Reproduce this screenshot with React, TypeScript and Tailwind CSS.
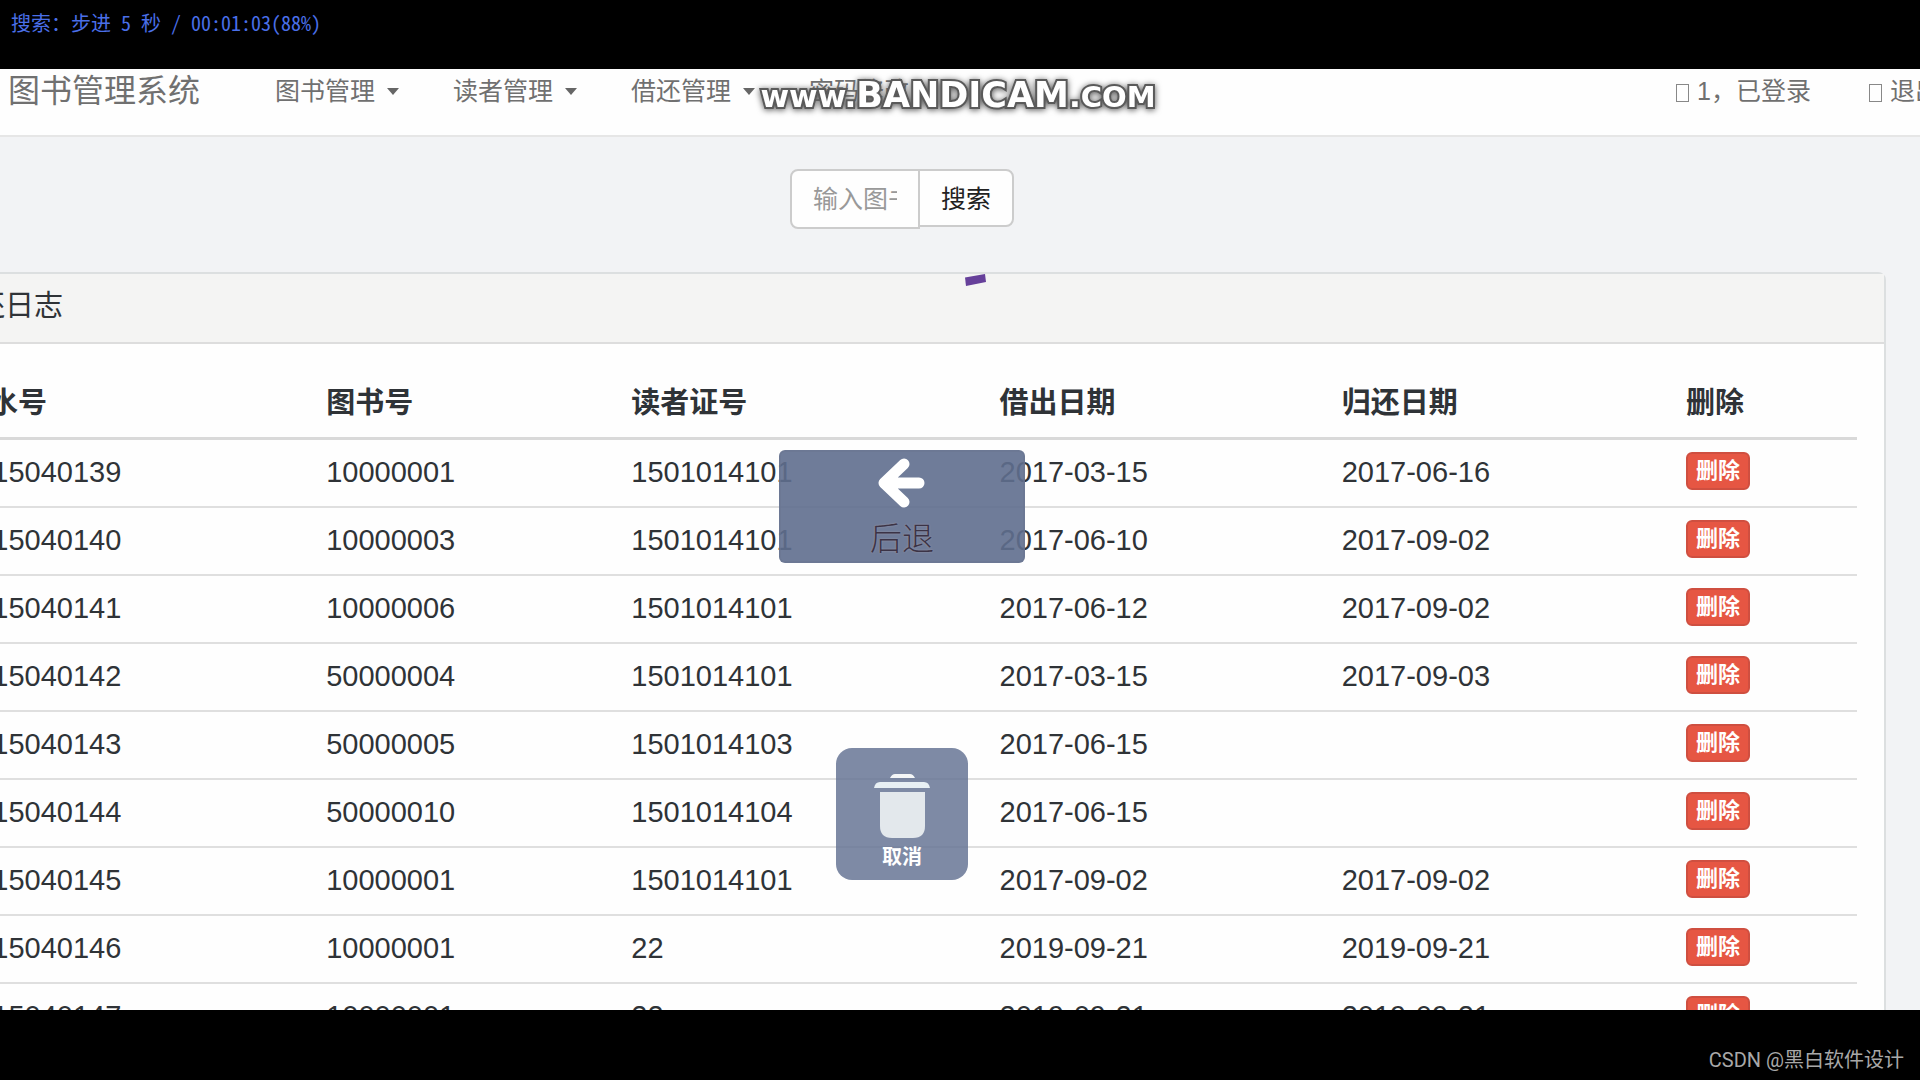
import { clsx } from "clsx";

interface LoanRecord {
  id: string;
  book: string;
  reader: string;
  lent: string;
  returned?: string;
}

const records: LoanRecord[] = [
  { id: "2015040139", book: "10000001", reader: "1501014101", lent: "2017-03-15", returned: "2017-06-16" },
  { id: "2015040140", book: "10000003", reader: "1501014101", lent: "2017-06-10", returned: "2017-09-02" },
  { id: "2015040141", book: "10000006", reader: "1501014101", lent: "2017-06-12", returned: "2017-09-02" },
  { id: "2015040142", book: "50000004", reader: "1501014101", lent: "2017-03-15", returned: "2017-09-03" },
  { id: "2015040143", book: "50000005", reader: "1501014103", lent: "2017-06-15" },
  { id: "2015040144", book: "50000010", reader: "1501014104", lent: "2017-06-15" },
  { id: "2015040145", book: "10000001", reader: "1501014101", lent: "2017-09-02", returned: "2017-09-02" },
  { id: "2015040146", book: "10000001", reader: "22", lent: "2019-09-21", returned: "2019-09-21" },
  { id: "2015040147", book: "10000001", reader: "22", lent: "2019-09-21", returned: "2019-09-21" },
];

const columns = [
  { title: "流水号", width: "w-[366px]" },
  { title: "图书号", width: "w-[305px]" },
  { title: "读者证号", width: "w-[368px]" },
  { title: "借出日期", width: "w-[342px]" },
  { title: "归还日期", width: "w-[344px]" },
  { title: "删除", width: "w-[184px]" },
];

const menus = [
  { label: "图书管理", dropdown: true },
  { label: "读者管理", dropdown: true },
  { label: "借还管理", dropdown: true },
  { label: "密码修改", dropdown: false },
];

function Caret() {
  return (
    <svg className="h-[7px] w-3 fill-[#666]" viewBox="0 0 12 7">
      <path d="M0 0h12L6 7z" />
    </svg>
  );
}

// icon font that failed to load
function MissingGlyph() {
  return <span className="mt-1 h-[18px] w-[13px] border border-[#888]" />;
}

function Navbar() {
  return (
    <nav className="flex items-center justify-between border-b-2 border-[#e6e6e6] bg-[#fefefe] pb-[22px] leading-[44px] text-[#707070]">
      <div className="flex items-center pl-[124px]">
        <a href="#" className="pr-12 text-[32px]">图书管理系统</a>
        {menus.map((menu) => (
          <a key={menu.label} href="#" className="flex items-center gap-3 px-[27px]">
            {menu.label}
            {menu.dropdown && <Caret />}
          </a>
        ))}
      </div>
      <div className="-mr-[47px] flex items-center gap-1">
        <a href="#" className="flex items-center gap-2 px-[27px]">
          <MissingGlyph />
          1，已登录
        </a>
        <a href="#" className="flex items-center gap-2 px-[27px]">
          <MissingGlyph />
          退出
        </a>
      </div>
    </nav>
  );
}

function SearchForm() {
  return (
    <form className="mt-8 flex items-start justify-center" onSubmit={(e) => e.preventDefault()}>
      <input
        type="text"
        aria-label="图书号"
        placeholder="输入图书号"
        className="h-[60px] w-[130px] rounded-l-lg border-2 border-[#ccc] bg-[#fefefe] px-[21px] outline-none placeholder:text-[#999]"
      />
      <button type="submit" className="-ml-0.5 h-[58px] rounded-r-lg border-2 border-[#ccc] bg-[#fefefe] px-[21px] pt-1 text-[#222]">
        搜索
      </button>
    </form>
  );
}

function LoanTable() {
  return (
    <table className="w-full table-fixed text-[29px]">
      <thead className="leading-10">
        <tr className="border-b-3 border-[#d9d9d9]">
          {columns.map((col) => (
            <th key={col.title} scope="col" className={clsx("px-[13px] pt-3 pb-[14px] text-left font-bold", col.width)}>
              {col.title}
            </th>
          ))}
        </tr>
      </thead>
      <tbody className="leading-10">
        {records.map((r) => (
          <tr key={r.id} className="border-b-2 border-[#dfdfdf] [&>td]:px-[13px] [&>td]:pt-3 [&>td]:pb-[14px] [&>td]:align-top">
            <td>{r.id}</td>
            <td>{r.book}</td>
            <td>{r.reader}</td>
            <td>{r.lent}</td>
            <td>{r.returned}</td>
            <td>
              <button className="block h-[38px] rounded-md border-2 border-[#cf4f40] bg-[#e65643] px-2 text-[22px] leading-8 font-bold text-white">
                删除
              </button>
            </td>
          </tr>
        ))}
      </tbody>
    </table>
  );
}

function BackHint() {
  return (
    <div className="absolute top-[381px] left-1/2 flex h-[113px] w-[246px] -translate-x-1/2 flex-col items-center rounded-md border-2 border-[#6a7690]/50 bg-[#5f6e8e]/90 pt-[5px]">
      <svg className="h-[52px] w-[50px]" viewBox="0 0 50 52" fill="none" stroke="white" strokeLinecap="round" strokeLinejoin="round">
        <path d="M27 7L7 26l20 19M9 26h33" strokeWidth="11" />
      </svg>
      <span className="mt-2.5 text-[32px] leading-10 font-light text-[#3b3346] [text-shadow:0_0_2px_#a09aa8]">后退</span>
    </div>
  );
}

function CancelHint() {
  return (
    <button className="absolute top-[679px] left-1/2 flex h-[132px] w-[132px] -translate-x-1/2 flex-col items-center rounded-2xl bg-[#677595]/85 pt-[26px] text-white">
      <svg className="h-[65px] w-14" viewBox="0 0 56 65">
        <path d="M16 4q2-4 5-4h15q3 0 5 4z" fill="#f4f6f7" />
        <path d="M0 14q1-6 6-6h44q5 0 6 6z" fill="#e8f0f4" />
        <path d="M6 18h45v34q0 12-12 12H18Q6 64 6 52z" fill="#e3e8ec" />
      </svg>
      <span className="mt-1 text-xl leading-7 font-bold">取消</span>
    </button>
  );
}

function Watermark() {
  return (
    <div className="absolute top-0 left-1/2 -translate-x-1/2 pr-1 font-['DejaVu_Sans'] font-bold whitespace-nowrap text-white [paint-order:stroke_fill] [-webkit-text-stroke:4px_#5a5a5a] [filter:drop-shadow(0_1px_3px_#555)]">
      <span className="text-[31px]">www.</span>
      <span className="text-[35px] leading-[52px]">BANDICAM</span>
      <span className="text-[31px]">.</span>
      <span className="text-[29px]">COM</span>
    </div>
  );
}

export default function App() {
  return (
    <div className="flex h-screen flex-col overflow-hidden bg-black font-['Liberation_Sans','Noto_Sans_CJK_SC',sans-serif] text-[25px] text-[#2f3337]">
      <header className="h-[69px] shrink-0 px-[11px] pt-2 font-['Noto_Sans_Mono_CJK_SC','Noto_Sans_CJK_SC',monospace] text-xl leading-[30px] font-light whitespace-pre text-[#4a6fe8]">
        搜索：步进 5 秒 / 00:01:03(88%)
      </header>

      <div className="relative min-h-0 flex-1 overflow-hidden bg-[#f2f3f5]">
        {/* the page is scrolled a little to the right */}
        <div className="relative -ml-[116px]">
          <Navbar />
          <SearchForm />
          <section className="mx-[34px] mt-[43px] rounded-lg border-2 border-[#dcdfe0] bg-[#fefefe]">
            <h3 className="border-b-2 border-[#ddd] bg-[#f4f4f3] px-[27px] pt-3 pb-4 text-[29px] leading-10">借还日志</h3>
            <div className="p-[27px]">
              <LoanTable />
            </div>
          </section>
          <BackHint />
          <CancelHint />
        </div>

        <Watermark />
        <svg className="absolute top-[205px] left-[965px] h-3 w-[22px] fill-[#66409a]" viewBox="0 0 22 12">
          <path d="M0 3.500L20 0l1 8L1 12z" />
        </svg>
      </div>

      <footer className="flex h-[70px] shrink-0 items-center justify-end px-4 pt-[30px] font-[Roboto,'Noto_Sans_CJK_SC',sans-serif] text-xl leading-7 text-[#a8a8a8]">
        CSDN @黑白软件设计
      </footer>
    </div>
  );
}
